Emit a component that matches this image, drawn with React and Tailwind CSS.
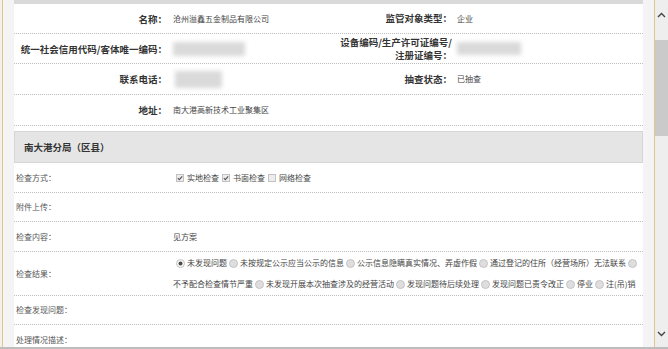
import React from "react";

const FONT = "font-['Noto_Sans_CJK_SC','Noto_Sans',sans-serif]";

function Blur({ w, h }) {
  return <div className={`bg-[#dadada] blur-[2px] ${w} ${h}`} />;
}

function Check({ checked }) {
  return (
    <svg width="8" height="8" viewBox="0 0 8 8" className="mr-[3px] shrink-0">
      <rect x="0.5" y="0.5" width="7" height="7" fill="#ececec" stroke="#c2c2c2" />
      {checked && <path d="M1.8 4.2 L3.3 5.7 L6.2 2.3" fill="none" stroke="#555" strokeWidth="1.1" />}
    </svg>
  );
}

function Radio({ checked }) {
  return (
    <svg width="9" height="9" viewBox="0 0 9 9" className="mx-[2px] shrink-0">
      <circle cx="4.5" cy="4.5" r="4" fill={checked ? "#f7f7f7" : "#dedede"} stroke="#c4c4c4" />
      {checked && <circle cx="4.5" cy="4.5" r="2" fill="#4a4a4a" />}
    </svg>
  );
}

const dot = "border-b border-dotted border-[#bdbdbd]";

function TopRow({ h, l1, v1, l2, v2 }) {
  return (
    <div className={`shrink-0 grid grid-cols-[153px_173px_112px_1fr] items-center ${h} ${dot}`}>
      <div className="text-right font-bold text-[9.5px] leading-[12px] text-[#333] whitespace-nowrap">{l1}</div>
      <div className="pl-[6px] text-[8px] text-[#444]">{v1}</div>
      <div className="text-right font-bold text-[9.5px] leading-[13px] text-[#333] whitespace-nowrap">{l2}</div>
      <div className="pl-[5px] text-[8px] text-[#444]">{v2}</div>
    </div>
  );
}

function BotRow({ h, label, children, line = true }) {
  return (
    <div className={`shrink-0 flex items-center ${h} ${line ? dot : ""}`}>
      <div className="w-[159px] shrink-0 pl-[2px] text-[8px] text-[#555]">{label}</div>
      <div className="flex-1 min-w-0 text-[8px] text-[#444]">{children}</div>
    </div>
  );
}

export default function App() {
  return (
    <div className={`relative w-[668px] h-[349px] overflow-hidden bg-[#f6f6f6] flex ${FONT}`}>
      <div className="w-[2px] bg-[#f3f1ea]" />
      <div className="w-[1px] bg-[#dfc58e]" />
      <div className="w-[11px] bg-[#f4f4f4]" />
      <div className="w-[629px] h-[347px] bg-white flex flex-col overflow-hidden">
        <div className="h-[4px] bg-[#d9d9d9] shrink-0" />
        <TopRow h="h-[30px]" l1="名称：" v1="沧州溢鑫五金制品有限公司" l2="监管对象类型：" v2="企业" />
        <TopRow
          h="h-[30px]"
          l1="统一社会信用代码/客体唯一编码："
          v1={<Blur w="w-[72px]" h="h-[14px]" />}
          l2={<>设备编码/生产许可证编号/<br />注册证编号：</>}
          v2={<Blur w="w-[64px]" h="h-[13px]" />}
        />
        <TopRow h="h-[31px]" l1="联系电话：" v1={<div className="ml-[2px]"><Blur w="w-[47px]" h="h-[17px]" /></div>} l2="抽查状态：" v2="已抽查" />
        <TopRow h="h-[31px]" l1="地址：" v1={<span className="whitespace-nowrap">南大港高新技术工业聚集区</span>} l2="" v2="" />
        <div className="h-[5px] shrink-0" />
        <div className="h-[32px] shrink-0 bg-[#e5e5e5] border border-[#d6d6d6] flex items-center pl-[9px] font-bold text-[9.5px] text-[#333]">
          南大港分局（区县）
        </div>
        <BotRow h="h-[30px]" label="检查方式：">
          <div className="flex items-center pl-[3px]">
            <Check checked /><span className="mr-[3px]">实地检查</span>
            <Check checked /><span className="mr-[3px]">书面检查</span>
            <Check /><span>网络检查</span>
          </div>
        </BotRow>
        <BotRow h="h-[29px]" label="附件上传：" />
        <BotRow h="h-[30px]" label="检查内容：">见方案</BotRow>
        <BotRow h="h-[44px]" label="检查结果：">
          <div className="flex flex-col gap-[9px] whitespace-nowrap">
            <div className="flex items-center pl-[1px]">
              <Radio checked /><span>未发现问题</span>
              <Radio /><span>未按规定公示应当公示的信息</span>
              <Radio /><span>公示信息隐瞒真实情况、弄虚作假</span>
              <Radio /><span>通过登记的住所（经营场所）无法联系</span>
              <Radio />
            </div>
            <div className="flex items-center">
              <span>不予配合检查情节严重</span>
              <Radio /><span>未发现开展本次抽查涉及的经营活动</span>
              <Radio /><span>发现问题待后续处理</span>
              <Radio /><span>发现问题已责令改正</span>
              <Radio /><span>停业</span>
              <Radio /><span>注(吊)销</span>
            </div>
          </div>
        </BotRow>
        <BotRow h="h-[29px]" label="检查发现问题：" />
        <BotRow h="h-[30px]" label="处理情况描述：" line={false} />
      </div>
      <div className="w-[11px] bg-[#f4f4f4]" />
      <div className="w-[1px] bg-[#dfc58e]" />
      <div className="w-[13px] bg-[#eeeeee] flex flex-col items-center">
        <svg width="9" height="6" viewBox="0 0 9 6" className="mt-[12px]">
          <path d="M1 5 L4.5 1.5 L8 5" fill="none" stroke="#444" strokeWidth="1.4" />
        </svg>
        <div className="mt-[22px] w-full h-[96px] bg-[#cacaca]" />
        <div className="flex-1" />
        <svg width="9" height="6" viewBox="0 0 9 6" className="mb-[12px]">
          <path d="M1 1 L4.5 4.5 L8 1" fill="none" stroke="#444" strokeWidth="1.4" />
        </svg>
      </div>
      <div className="absolute left-0 right-0 bottom-0 h-[2px] bg-[#bdbdbd]" />
    </div>
  );
}
